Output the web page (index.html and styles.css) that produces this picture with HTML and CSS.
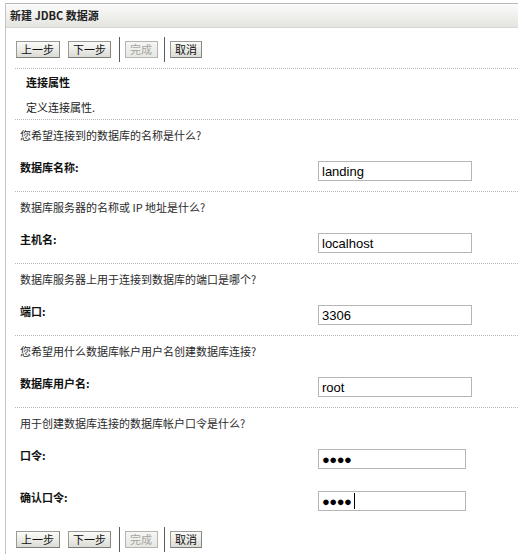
FILE: index.html
```html
<!DOCTYPE html>
<html lang="zh-CN">
<head>
<meta charset="utf-8">
<title>新建 JDBC 数据源</title>
<link rel="stylesheet" href="styles.css">
</head>
<body>
<div class="panel">
  <div class="titlebar">新建 JDBC 数据源</div>
  <div class="inner">
    <div class="toolbar">
      <button class="btn">上一步</button>
      <button class="btn">下一步</button>
      <span class="sep"></span>
      <button class="btn" disabled>完成</button>
      <span class="sep"></span>
      <button class="btn">取消</button>
    </div>
    <div class="intro">
      <div class="intro-title">连接属性</div>
      <div class="intro-desc">定义连接属性.</div>
    </div>
    <div class="section">
      <div class="question">您希望连接到的数据库的名称是什么?</div>
      <div class="field">
        <label class="label">数据库名称:</label>
        <input class="input" type="text" value="landing">
      </div>
    </div>
    <div class="section">
      <div class="question">数据库服务器的名称或 IP 地址是什么?</div>
      <div class="field">
        <label class="label">主机名:</label>
        <input class="input" type="text" value="localhost">
      </div>
    </div>
    <div class="section">
      <div class="question">数据库服务器上用于连接到数据库的端口是哪个?</div>
      <div class="field">
        <label class="label">端口:</label>
        <input class="input" type="text" value="3306">
      </div>
    </div>
    <div class="section">
      <div class="question">您希望用什么数据库帐户用户名创建数据库连接?</div>
      <div class="field">
        <label class="label">数据库用户名:</label>
        <input class="input" type="text" value="root">
      </div>
    </div>
    <div class="section">
      <div class="question">用于创建数据库连接的数据库帐户口令是什么?</div>
      <div class="field">
        <label class="label">口令:</label>
        <input class="input pw" type="text" value="●●●●">
      </div>
      <div class="field field-gap">
        <label class="label">确认口令:</label>
        <span class="caret-wrap"><input class="input pw" type="text" value="●●●●"><span class="caret"></span></span>
      </div>
    </div>
    <div class="toolbar toolbar-bottom">
      <button class="btn">上一步</button>
      <button class="btn">下一步</button>
      <span class="sep"></span>
      <button class="btn" disabled>完成</button>
      <span class="sep"></span>
      <button class="btn">取消</button>
    </div>
  </div>
</div>
</body>
</html>
```
FILE: styles.css
```css
html, body {
  margin: 0;
  padding: 0;
  background: #fff;
  overflow: hidden;
}
body {
  font-family: "Noto Sans CJK SC", "Liberation Sans", sans-serif;
  font-size: 11px;
  line-height: 16px;
  color: #1a1a1a;
}
.panel {
  margin-top: 3px;
  margin-left: 5px;
  border-left: 1px solid #c4c4c4;
  height: 560px;
}
.titlebar {
  height: 23px;
  line-height: 23px;
  padding-left: 4px;
  border-top: 1px solid #b9b9b9;
  border-bottom: 1px solid #d6d6d2;
  background: linear-gradient(#fbfbfb, #f2f2f0 40%, #e4e4e0);
  font-weight: bold;
  color: #222;
}
.inner {
  margin-left: 9px;
}
.toolbar {
  display: flex;
  align-items: center;
  height: 25px;
  padding: 9px 0 6px 1px;
}
.toolbar-bottom {
  padding-top: 6px;
  padding-bottom: 0;
}
.btn {
  font-family: "Noto Sans CJK SC", "Liberation Sans", sans-serif;
  font-size: 11px;
  line-height: 15px;
  height: 17px;
  padding: 0 4px;
  margin: 0 8px 0 0;
  border: 1px solid #9a9a96;
  border-bottom-color: #7c7c78;
  border-right-color: #86867f;
  border-radius: 0;
  background: linear-gradient(#fbfbf9, #ecece8 50%, #dcdcd6);
  color: #111;
}
.btn:first-child {
  padding: 0 5px 0 4px;
}
.btn:disabled {
  color: #a4a4a0;
  border-color: #b4b4b0;
  background: linear-gradient(#f6f6f4, #e6e6e2);
  margin-right: 6px;
  padding: 0 5px 0 4px;
}
.sep {
  width: 1px;
  height: 25px;
  background: #5c5c5c;
  margin: 0 5px 0 0;
}
.intro {
  border-top: 1px dotted #b8b8b8;
  padding: 5px 0 4px 11px;
}
.intro-title {
  font-weight: bold;
  color: #111;
}
.intro-desc {
  margin-top: 9px;
}
.section {
  border-top: 1px dotted #b8b8b8;
  padding: 7px 0 10px 5px;
}
.question {
  margin-bottom: 16px;
  color: #2a2a2a;
}
.field {
  display: flex;
  align-items: flex-start;
}
.field-gap {
  margin-top: 20px;
}
.label {
  width: 298px;
  flex: none;
  font-weight: bold;
  color: #111;
}
.input {
  box-sizing: border-box;
  margin: 2px 0 0 0;
  width: 154px;
  height: 20px;
  padding: 0 3px;
  border: 1px solid #b6b6b2;
  border-radius: 0;
  outline: none;
  font-family: "Liberation Sans", Arial, sans-serif;
  font-size: 13px;
  color: #000;
  background: #fff;
}
.pw {
  width: 148px;
  font-size: 13px;
  letter-spacing: -0.5px;
}
.caret-wrap {
  position: relative;
  display: block;
}
.caret {
  position: absolute;
  left: 36px;
  top: 4px;
  width: 1px;
  height: 16px;
  background: #000;
}
```
